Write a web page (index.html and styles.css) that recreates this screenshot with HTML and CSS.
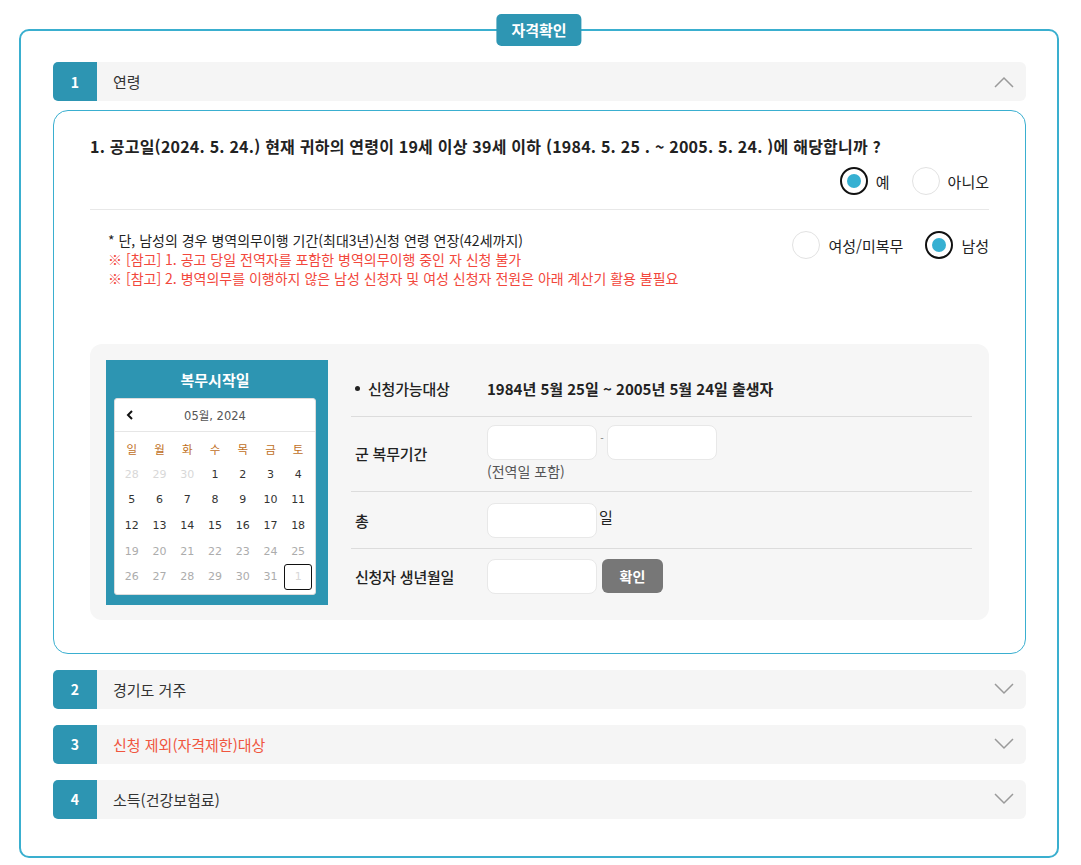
FILE: index.html
```html
<!DOCTYPE html>
<html lang="ko">
<head>
<meta charset="utf-8">
<title>자격확인</title>
<link rel="stylesheet" href="styles.css">
</head>
<body>
<div class="frame">
  <div class="badge">자격확인</div>

  <div class="acc">
    <div class="acc-head">
      <span class="num">1</span>
      <span class="acc-title">연령</span>
      <svg class="chev" width="20" height="12" viewBox="0 0 20 12"><polyline points="1,11 10,2 19,11" fill="none" stroke="#9a9a9a" stroke-width="1.5"/></svg>
    </div>
    <div class="panel">
      <p class="question">1. 공고일(2024. 5. 24.) 현재 귀하의 연령이 19세 이상 39세 이하 (1984. 5. 25 . ~ 2005. 5. 24. )에 해당합니까 ?</p>
      <div class="choices">
        <label class="radio on"><span class="circle"></span><span>예</span></label>
        <label class="radio"><span class="circle"></span><span>아니오</span></label>
      </div>
      <div class="notes-row">
        <div class="notes">
          <p>* 단, 남성의 경우 병역의무이행 기간(최대3년)신청 연령 연장(42세까지)</p>
          <p class="red">※ [참고] 1. 공고 당일 전역자를 포함한 병역의무이행 중인 자 신청 불가</p>
          <p class="red">※ [참고] 2. 병역의무를 이행하지 않은 남성 신청자 및 여성 신청자 전원은 아래 계산기 활용 불필요</p>
        </div>
        <div class="choices gender">
          <label class="radio"><span class="circle"></span><span>여성/미복무</span></label>
          <label class="radio on"><span class="circle"></span><span>남성</span></label>
        </div>
      </div>

      <div class="calc">
        <div class="cal-box">
          <div class="cal-title">복무시작일</div>
          <div class="cal">
            <div class="cal-head">
              <svg class="prev" width="8" height="10" viewBox="0 0 8 10"><polyline points="6,1 2,5 6,9" fill="none" stroke="#111" stroke-width="2"/></svg>
              <span class="cal-month">05월, 2024</span>
              <span></span>
            </div>
            <div class="cal-grid">
              <span class="wd">일</span><span class="wd">월</span><span class="wd">화</span><span class="wd">수</span><span class="wd">목</span><span class="wd">금</span><span class="wd">토</span>
              <span class="other">28</span><span class="other">29</span><span class="other">30</span><span>1</span><span>2</span><span>3</span><span>4</span>
              <span>5</span><span>6</span><span>7</span><span>8</span><span>9</span><span>10</span><span>11</span>
              <span>12</span><span>13</span><span>14</span><span>15</span><span>16</span><span>17</span><span>18</span>
              <span class="dis">19</span><span class="dis">20</span><span class="dis">21</span><span class="dis">22</span><span class="dis">23</span><span class="dis">24</span><span class="dis">25</span>
              <span class="dis">26</span><span class="dis">27</span><span class="dis">28</span><span class="dis">29</span><span class="dis">30</span><span class="dis">31</span><span class="other sel">1</span>
            </div>
          </div>
        </div>

        <div class="form">
          <div class="row r1">
            <div class="label"><span class="bullet"></span>신청가능대상</div>
            <div class="value strong">1984년 5월 25일 ~ 2005년 5월 24일 출생자</div>
          </div>
          <div class="row r2">
            <div class="label">군 복무기간</div>
            <div class="value">
              <div class="pair">
                <span class="field"></span>
                <span class="dash">-</span>
                <span class="field"></span>
              </div>
              <div class="hint">(전역일 포함)</div>
            </div>
          </div>
          <div class="row r3">
            <div class="label">총</div>
            <div class="value inline"><span class="field"></span><span class="unit">일</span></div>
          </div>
          <div class="row r4">
            <div class="label">신청자 생년월일</div>
            <div class="value inline"><span class="field"></span><button class="btn">확인</button></div>
          </div>
        </div>
      </div>
    </div>
  </div>

  <div class="acc">
    <div class="acc-head">
      <span class="num">2</span>
      <span class="acc-title">경기도 거주</span>
      <svg class="chev" width="20" height="12" viewBox="0 0 20 12"><polyline points="1,1 10,10 19,1" fill="none" stroke="#9a9a9a" stroke-width="1.5"/></svg>
    </div>
  </div>
  <div class="acc">
    <div class="acc-head">
      <span class="num">3</span>
      <span class="acc-title red">신청 제외(자격제한)대상</span>
      <svg class="chev" width="20" height="12" viewBox="0 0 20 12"><polyline points="1,1 10,10 19,1" fill="none" stroke="#9a9a9a" stroke-width="1.5"/></svg>
    </div>
  </div>
  <div class="acc">
    <div class="acc-head">
      <span class="num">4</span>
      <span class="acc-title">소득(건강보험료)</span>
      <svg class="chev" width="20" height="12" viewBox="0 0 20 12"><polyline points="1,1 10,10 19,1" fill="none" stroke="#9a9a9a" stroke-width="1.5"/></svg>
    </div>
  </div>
</div>
</body>
</html>
```

FILE: styles.css
```css
* { box-sizing: border-box; }
html, body { background: #fff; }
body {
  margin: 0;
  padding: 29px 22px 0 19px;
  font-family: "Noto Sans CJK KR", "Noto Sans", sans-serif;
  color: #222;
}
p { margin: 0; }

.frame {
  position: relative;
  border: 2px solid #3aafcf;
  border-radius: 10px;
  padding: 31px 31px 37px 32px;
  display: flex;
  flex-direction: column;
  gap: 16px;
}
.badge {
  position: absolute;
  top: -17px;
  left: 50%;
  transform: translateX(-50%);
  height: 32px;
  line-height: 32px;
  padding: 0 15px;
  background: #2e96b3;
  color: #fff;
  font-size: 15px;
  font-weight: 700;
  border-radius: 5px;
  white-space: nowrap;
}

.acc-head {
  display: flex;
  align-items: center;
  height: 39px;
  background: #f5f5f5;
  border-radius: 6px;
}
.num {
  width: 44px;
  height: 39px;
  flex: none;
  background: #2d95b2;
  color: #fff;
  font-weight: 700;
  font-size: 14px;
  display: flex;
  align-items: center;
  justify-content: center;
  border-radius: 5px 0 0 5px;
}
.acc-title {
  flex: 1;
  padding-left: 16px;
  font-size: 15px;
  color: #333;
}
.acc-title.red { color: #f0563f; }
.chev { margin-right: 12px; }

.panel {
  margin-top: 9px;
  border: 1px solid #3aafd0;
  border-radius: 15px;
  padding: 23px 36px 33px 36px;
}
.question {
  font-size: 16px;
  font-weight: 700;
  line-height: 24px;
  color: #222;
  letter-spacing: 0.22px;
}
.choices {
  display: flex;
  justify-content: flex-end;
  gap: 22px;
  margin-top: 9px;
}
.radio {
  display: flex;
  align-items: center;
  gap: 8px;
  font-size: 15px;
  color: #222;
}
.circle {
  width: 28px;
  height: 28px;
  border-radius: 50%;
  border: 1px solid #e2e2e2;
  background: #fff;
  display: flex;
  align-items: center;
  justify-content: center;
}
.radio.on .circle { border: 2px solid #111; }
.radio.on .circle::after {
  content: "";
  width: 14px;
  height: 14px;
  border-radius: 50%;
  background: #36b0d2;
}

.notes-row {
  margin-top: 14px;
  border-top: 1px solid #e8e8e8;
  padding-top: 21px;
  display: flex;
  justify-content: space-between;
  align-items: flex-start;
}
.notes {
  padding-left: 18px;
  font-size: 14px;
  line-height: 19px;
  color: #222;
}
.notes .red { color: #f2473c; }
.choices.gender { margin-top: 0; gap: 22px; }

.calc {
  margin-top: 56px;
  background: #f6f6f6;
  border-radius: 12px;
  padding: 16px 17px 15px 16px;
  display: flex;
  gap: 23px;
}
.cal-box {
  width: 222px;
  flex: none;
  background: #2d95b2;
  padding: 0 12px 10px 8px;
}
.cal-title {
  height: 38px;
  line-height: 40px;
  text-align: center;
  color: #fff;
  font-size: 15px;
  font-weight: 700;
}
.cal {
  background: #fff;
  border: 1px solid #dcdcdc;
  border-radius: 3px;
}
.cal-head {
  height: 33px;
  display: grid;
  grid-template-columns: 30px 1fr 30px;
  align-items: center;
  border-bottom: 1px solid #e6e6e6;
}
.prev { justify-self: center; }
.cal-month {
  text-align: center;
  font-family: "DejaVu Sans", "Noto Sans CJK KR", sans-serif;
  font-size: 11.5px;
  color: #555;
}
.cal-grid {
  display: grid;
  grid-template-columns: repeat(7, 1fr);
  grid-auto-rows: 25.6px;
  padding: 4px 3px 4px;
  font-family: "DejaVu Sans", "Noto Sans CJK KR", sans-serif;
  font-size: 11px;
  color: #333;
}
.cal-grid span {
  display: flex;
  align-items: center;
  justify-content: center;
}
.cal-grid .wd { color: #c0701e; font-family: "Noto Sans CJK KR", sans-serif; font-size: 11.5px; }
.cal-grid .other { color: #d8d8d8; }
.cal-grid .dis { color: #acacac; }
.cal-grid .sel { border: 1px solid #111; border-radius: 3px; }

.form { flex: 1; display: flex; flex-direction: column; }
.row {
  display: flex;
  align-items: center;
  border-bottom: 1px solid #dcdcdc;
}
.row:last-child { border-bottom: 0; }
.r1 { height: 57px; }
.r2 { padding: 8px 0 10px; }
.r3 { height: 57px; }
.r4 { flex: 1; }
.label {
  width: 136px;
  flex: none;
  padding-left: 4px;
  font-size: 15px;
  letter-spacing: -0.2px;
  font-weight: 500;
  color: #222;
  display: flex;
  align-items: center;
}
.bullet {
  width: 5px;
  height: 5px;
  border-radius: 50%;
  background: #222;
  margin-right: 8px;
}
.value { font-size: 15px; }
.value.strong { font-weight: 700; color: #222; }
.pair { display: flex; align-items: center; }
.dash { width: 10px; text-align: center; font-size: 10px; color: #777; margin-top: -10px; }
.field {
  display: block;
  width: 110px;
  height: 35px;
  background: #fff;
  border: 1px solid #e8e8e8;
  border-radius: 8px;
}
.hint {
  margin-top: 2px;
  font-size: 14px;
  line-height: 19px;
  color: #555;
}
.inline { display: flex; align-items: center; }
.r3 .inline { align-items: flex-start; }
.unit { font-size: 15px; color: #222; margin-left: 2px; line-height: 28px; }
.btn {
  margin-left: 5px;
  width: 61px;
  height: 34px;
  border: 0;
  border-radius: 6px;
  background: #777;
  color: #fff;
  font-family: inherit;
  font-size: 14px;
  font-weight: 700;
  margin-top: -2px;
}
```
